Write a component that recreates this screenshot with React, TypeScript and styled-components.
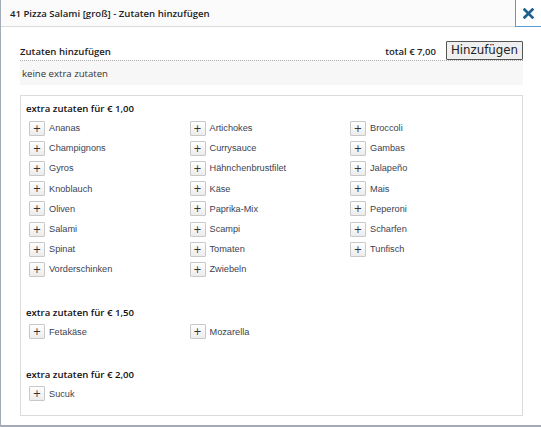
import styled, { createGlobalStyle } from 'styled-components';

const GlobalStyle = createGlobalStyle`
	html, body {
		margin: 0;
		padding: 0;
		background: #a3abb9;
	}
	body {
		font-family: 'Open Sans', 'Noto Sans', sans-serif;
	}
`;

const groups = [
	{
		price: '1,00',
		items: [
			'Ananas', 'Artichokes', 'Broccoli',
			'Champignons', 'Currysauce', 'Gambas',
			'Gyros', 'Hähnchenbrustfilet', 'Jalapeño',
			'Knoblauch', 'Käse', 'Mais',
			'Oliven', 'Paprika-Mix', 'Peperoni',
			'Salami', 'Scampi', 'Scharfen',
			'Spinat', 'Tomaten', 'Tunfisch',
			'Vorderschinken', 'Zwiebeln',
		],
	},
	{ price: '1,50', items: ['Fetakäse', 'Mozarella'] },
	{ price: '2,00', items: ['Sucuk'] },
];

const App = () => {
	return (
		<>
			<GlobalStyle />
			<Dialog>
				<TitleBar>
					<Title>41 Pizza Salami [groß] - Zutaten hinzufügen</Title>
					<Close aria-label="close">
						<svg width="11" height="11" viewBox="0 0 10 10">
							<path d="M1.5 1.5 L8.5 8.5 M8.5 1.5 L1.5 8.5" stroke="#1d5f8f" strokeWidth="2.5" strokeLinecap="square" />
						</svg>
					</Close>
				</TitleBar>

				<Content>
					<HeaderRow>
						<Label>Zutaten hinzufügen</Label>
						<Total>total € 7,00</Total>
						<AddButton>Hinzufügen</AddButton>
					</HeaderRow>
					<Selected>keine extra zutaten</Selected>

					<Extras>
						{groups.map((group) => (
							<Section key={group.price}>
								<SectionTitle>extra zutaten für € {group.price}</SectionTitle>
								<Grid>
									{group.items.map((item) => (
										<Item key={item}>
											<PlusButton>+</PlusButton>
											<ItemName>{item}</ItemName>
										</Item>
									))}
								</Grid>
							</Section>
						))}
					</Extras>
				</Content>
			</Dialog>
		</>
	);
};
export default App;

const Dialog = styled.div`
	margin-left: 1px;
	width: 540px;
	height: 425px;
	background: #fff;
	display: flex;
	flex-direction: column;
	overflow: hidden;
`;

const TitleBar = styled.div`
	height: 26px;
	display: flex;
	align-items: stretch;
	background: #fbfbfb;
	border-bottom: 1px solid #dcdcdc;
`;

const Title = styled.div`
	flex: 1;
	display: flex;
	align-items: center;
	padding-left: 9px;
	font-size: 9.6px;
	font-weight: 600;
	color: #222;
`;

const Close = styled.div`
	width: 25px;
	display: flex;
	align-items: center;
	justify-content: center;
	border-left: 1px solid #5b9bd5;
	border-bottom: 1px solid #5b9bd5;
	margin-bottom: -1px;
	background: #fff;
`;

const Content = styled.div`
	padding: 14px 18px 0 19px;
	display: flex;
	flex-direction: column;
`;

const HeaderRow = styled.div`
	display: flex;
	align-items: center;
	height: 19px;
	border-bottom: 1px dotted #aaa;
`;

const Label = styled.div`
	flex: 1;
	font-size: 9.6px;
	font-weight: 600;
	color: #222;
	padding-top: 1px;
`;

const Total = styled.div`
	font-size: 9.5px;
	font-weight: 600;
	color: #222;
	margin-right: 10px;
	padding-top: 1px;
`;

const AddButton = styled.button`
	height: 19px;
	width: 77px;
	margin-bottom: 1px;
	padding: 0;
	font-family: 'DejaVu Sans', sans-serif;
	font-size: 11.8px;
	color: #222;
	background: #efefef;
	border: 1px solid #555;
	border-radius: 1px;
`;

const Selected = styled.div`
	height: 24px;
	display: flex;
	align-items: center;
	padding-left: 2px;
	background: #f7f7f7;
	font-size: 9.6px;
	color: #333;
`;

const Extras = styled.div`
	box-sizing: border-box;
	margin-top: 10px;
	height: 321px;
	border: 1px solid #dcdcdc;
	padding: 6px 0 0 8px;
`;

const Section = styled.div`
	margin-bottom: 26px;
`;

const SectionTitle = styled.div`
	height: 14px;
	line-height: 14px;
	font-size: 9.6px;
	font-weight: 600;
	color: #111;
	margin: 0 0 2px -3px;
`;

const Grid = styled.div`
	display: grid;
	grid-template-columns: repeat(3, 160.5px);
	grid-auto-rows: 20.2px;
`;

const Item = styled.div`
	display: flex;
	align-items: center;
`;

const PlusButton = styled.div`
	width: 14px;
	height: 13px;
	display: flex;
	align-items: center;
	justify-content: center;
	border: 1px solid #c8c8c8;
	border-radius: 1px;
	background: linear-gradient(#ffffff, #ececec);
	font-family: 'DejaVu Sans', sans-serif;
	font-size: 10px;
	color: #333;
`;

const ItemName = styled.span`
	margin-left: 4px;
	font-family: 'Liberation Sans', Arial, sans-serif;
	font-size: 9.2px;
	color: #3b4252;
`;
